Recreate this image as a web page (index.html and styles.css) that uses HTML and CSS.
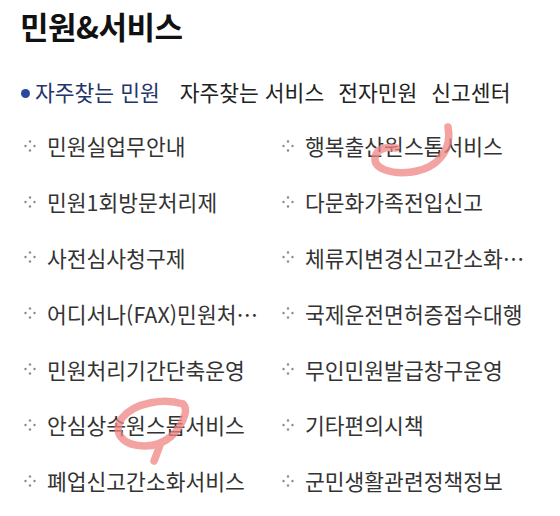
FILE: index.html
```html
<!DOCTYPE html>
<html lang="ko">
<head>
<meta charset="utf-8">
<title>민원&amp;서비스</title>
<link rel="stylesheet" href="styles.css">
</head>
<body>
<div class="page">
  <h1 class="title">민원&amp;서비스</h1>
  <nav class="tabs">
    <span class="tab active"><span class="dot"></span>자주찾는 민원</span>
    <span class="tab">자주찾는 서비스</span>
    <span class="tab">전자민원</span>
    <span class="tab">신고센터</span>
  </nav>
  <ul class="list">
    <li class="item"><svg class="bul" viewBox="0 0 12 12"><circle cx="6" cy="1.5" r="1.2"/><circle cx="1.5" cy="6" r="1.2"/><circle cx="10.5" cy="6" r="1.2"/><circle cx="6" cy="10.5" r="1.2"/></svg><span class="txt">민원실업무안내</span></li>
    <li class="item"><svg class="bul" viewBox="0 0 12 12"><circle cx="6" cy="1.5" r="1.2"/><circle cx="1.5" cy="6" r="1.2"/><circle cx="10.5" cy="6" r="1.2"/><circle cx="6" cy="10.5" r="1.2"/></svg><span class="txt">행복출산원스톱서비스</span></li>
    <li class="item"><svg class="bul" viewBox="0 0 12 12"><circle cx="6" cy="1.5" r="1.2"/><circle cx="1.5" cy="6" r="1.2"/><circle cx="10.5" cy="6" r="1.2"/><circle cx="6" cy="10.5" r="1.2"/></svg><span class="txt">민원1회방문처리제</span></li>
    <li class="item"><svg class="bul" viewBox="0 0 12 12"><circle cx="6" cy="1.5" r="1.2"/><circle cx="1.5" cy="6" r="1.2"/><circle cx="10.5" cy="6" r="1.2"/><circle cx="6" cy="10.5" r="1.2"/></svg><span class="txt">다문화가족전입신고</span></li>
    <li class="item"><svg class="bul" viewBox="0 0 12 12"><circle cx="6" cy="1.5" r="1.2"/><circle cx="1.5" cy="6" r="1.2"/><circle cx="10.5" cy="6" r="1.2"/><circle cx="6" cy="10.5" r="1.2"/></svg><span class="txt">사전심사청구제</span></li>
    <li class="item"><svg class="bul" viewBox="0 0 12 12"><circle cx="6" cy="1.5" r="1.2"/><circle cx="1.5" cy="6" r="1.2"/><circle cx="10.5" cy="6" r="1.2"/><circle cx="6" cy="10.5" r="1.2"/></svg><span class="txt">체류지변경신고간소화…</span></li>
    <li class="item"><svg class="bul" viewBox="0 0 12 12"><circle cx="6" cy="1.5" r="1.2"/><circle cx="1.5" cy="6" r="1.2"/><circle cx="10.5" cy="6" r="1.2"/><circle cx="6" cy="10.5" r="1.2"/></svg><span class="txt">어디서나(FAX)민원처…</span></li>
    <li class="item"><svg class="bul" viewBox="0 0 12 12"><circle cx="6" cy="1.5" r="1.2"/><circle cx="1.5" cy="6" r="1.2"/><circle cx="10.5" cy="6" r="1.2"/><circle cx="6" cy="10.5" r="1.2"/></svg><span class="txt">국제운전면허증접수대행</span></li>
    <li class="item"><svg class="bul" viewBox="0 0 12 12"><circle cx="6" cy="1.5" r="1.2"/><circle cx="1.5" cy="6" r="1.2"/><circle cx="10.5" cy="6" r="1.2"/><circle cx="6" cy="10.5" r="1.2"/></svg><span class="txt">민원처리기간단축운영</span></li>
    <li class="item"><svg class="bul" viewBox="0 0 12 12"><circle cx="6" cy="1.5" r="1.2"/><circle cx="1.5" cy="6" r="1.2"/><circle cx="10.5" cy="6" r="1.2"/><circle cx="6" cy="10.5" r="1.2"/></svg><span class="txt">무인민원발급창구운영</span></li>
    <li class="item"><svg class="bul" viewBox="0 0 12 12"><circle cx="6" cy="1.5" r="1.2"/><circle cx="1.5" cy="6" r="1.2"/><circle cx="10.5" cy="6" r="1.2"/><circle cx="6" cy="10.5" r="1.2"/></svg><span class="txt">안심상속원스톱서비스</span></li>
    <li class="item"><svg class="bul" viewBox="0 0 12 12"><circle cx="6" cy="1.5" r="1.2"/><circle cx="1.5" cy="6" r="1.2"/><circle cx="10.5" cy="6" r="1.2"/><circle cx="6" cy="10.5" r="1.2"/></svg><span class="txt">기타편의시책</span></li>
    <li class="item"><svg class="bul" viewBox="0 0 12 12"><circle cx="6" cy="1.5" r="1.2"/><circle cx="1.5" cy="6" r="1.2"/><circle cx="10.5" cy="6" r="1.2"/><circle cx="6" cy="10.5" r="1.2"/></svg><span class="txt">폐업신고간소화서비스</span></li>
    <li class="item"><svg class="bul" viewBox="0 0 12 12"><circle cx="6" cy="1.5" r="1.2"/><circle cx="1.5" cy="6" r="1.2"/><circle cx="10.5" cy="6" r="1.2"/><circle cx="6" cy="10.5" r="1.2"/></svg><span class="txt">군민생활관련정책정보</span></li>
  </ul>
  <svg class="marks" viewBox="0 0 560 516" width="560" height="516">
    <path d="M448,127 C452,148 440,168 412,172 C390,175 374,168 375,158 C376,150 384,146 396,148"/>
    <path d="M183,404 C165,398 135,402 122,418 C112,432 122,446 145,446 C165,446 180,432 185,414 C186,410 185,406 183,404 M160,445 C158,451 156,456 154,461"/>
  </svg>
</div>
</body>
</html>
```

FILE: styles.css
```css
* { box-sizing: border-box; }
html, body { margin: 0; padding: 0; background: #fff; }
body {
  font-family: "Noto Sans CJK KR", "Noto Sans", sans-serif;
  color: #333;
}
.page {
  position: relative;
  width: 560px;
  height: 516px;
  padding: 5px 0 0 20px;
  overflow: hidden;
}
.title {
  margin: 0;
  font-size: 31px;
  line-height: 42px;
  font-weight: 700;
  color: #111;
  letter-spacing: -0.5px;
}
.tabs {
  display: flex;
  margin-top: 30px;
  font-size: 21.5px;
  line-height: 30px;
  color: #222;
}
.tab { margin-right: 14px; }
.tab.active {
  color: #24346a;
  margin-right: 20px;
  display: flex;
  align-items: center;
}
.dot {
  width: 9px;
  height: 9px;
  border-radius: 50%;
  background: #2b48a0;
  margin: 2px 5px 0 1px;
}
.list {
  list-style: none;
  margin: 11px 0 0;
  padding: 0;
  display: grid;
  grid-template-columns: 258px 258px;
  grid-auto-rows: 55.8px;
}
.item {
  display: flex;
  align-items: center;
  font-size: 21.5px;
  color: #333;
}
.bul {
  width: 12px;
  height: 12px;
  fill: #8a8a8a;
  margin: 0 11px 0 4px;
  flex: none;
}
.txt {
  white-space: nowrap;
}
.marks {
  position: absolute;
  top: 0;
  left: 0;
  pointer-events: none;
}
.marks path {
  fill: none;
  stroke: #f08484;
  stroke-opacity: 0.75;
  stroke-width: 7.5;
  stroke-linecap: round;
  stroke-linejoin: round;
}
```
